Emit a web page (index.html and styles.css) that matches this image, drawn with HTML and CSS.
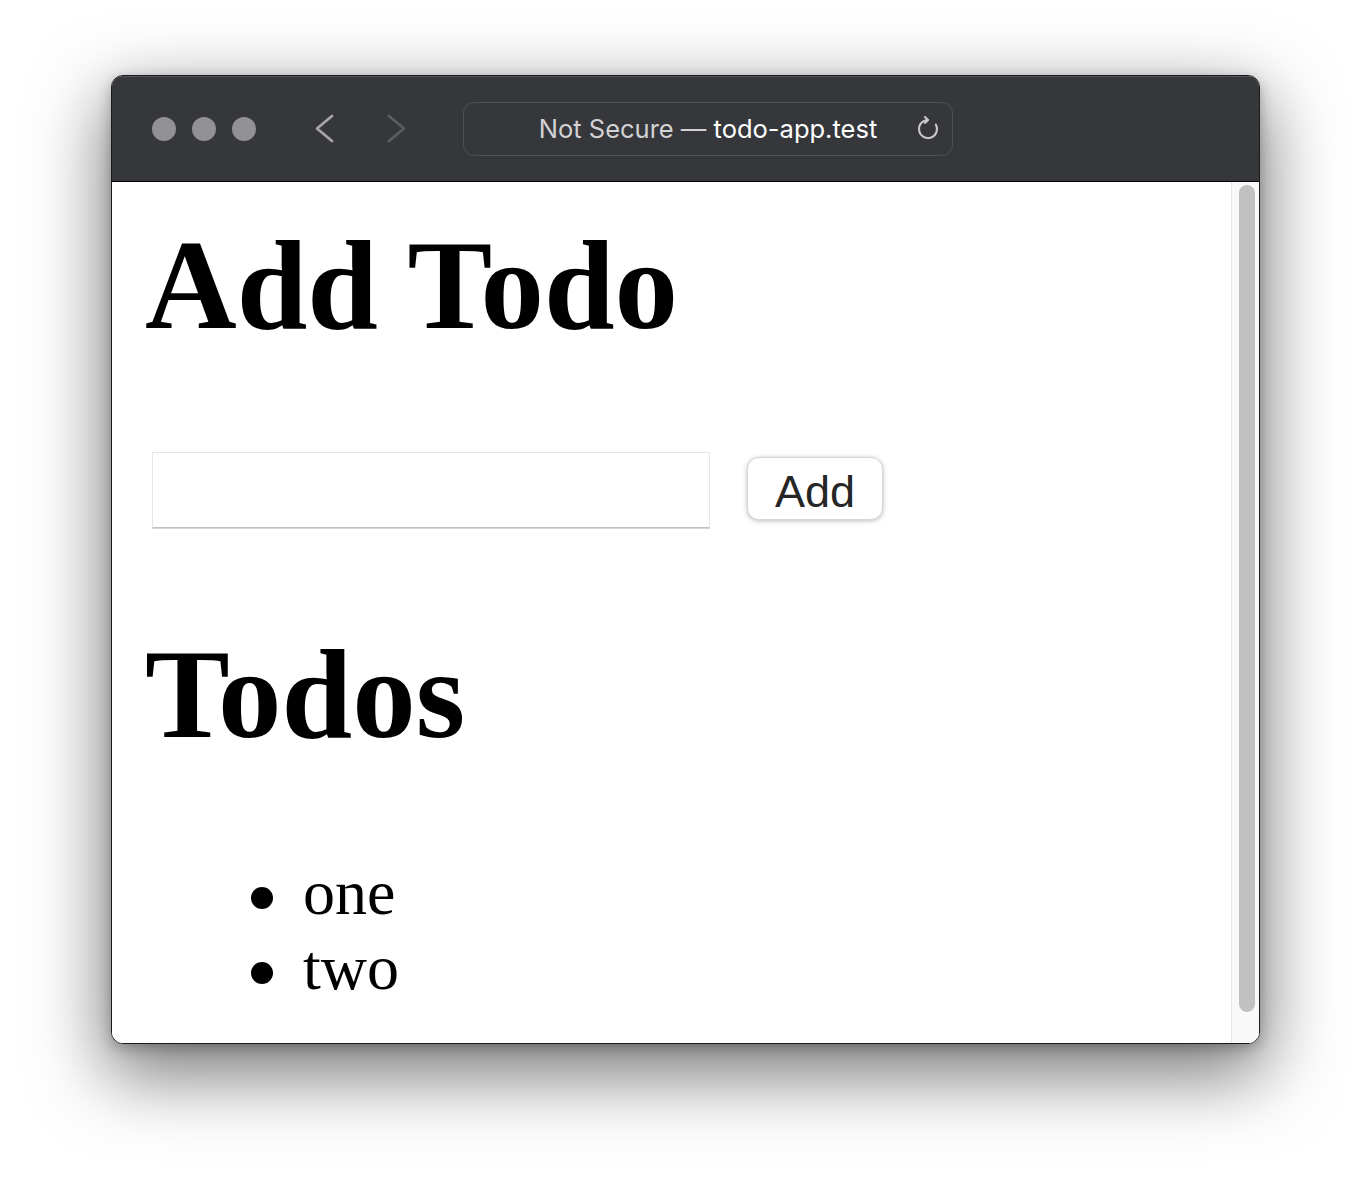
FILE: index.html
```html
<!DOCTYPE html>
<html lang="en">
<head>
<meta charset="utf-8">
<title>Todo App</title>
<link rel="stylesheet" href="styles.css">
</head>
<body>
  <div class="window">
    <div class="toolbar">
      <div class="lights"><span class="light"></span><span class="light"></span><span class="light"></span></div>
      <svg class="nav nav-back" width="30" height="40" viewBox="0 0 30 40"><polyline points="22,7 7,19.5 22,32" /></svg>
      <svg class="nav nav-fwd" width="30" height="40" viewBox="0 0 30 40"><polyline points="9,7 24,19.5 9,32" /></svg>
      <div class="urlbar">
        <span class="url-text"><span class="dim">Not Secure — </span>todo-app.test</span>
        <svg class="reload" width="24" height="26" viewBox="0 0 24 26"><path d="M12 4 A9 9 0 1 0 19.8 8.5" /><polyline points="9,1 12,4 9,7" /></svg>
      </div>
    </div>
    <div class="viewport">
      <main class="page">
        <h1 class="heading">Add Todo</h1>
        <form class="add-form">
          <input class="todo-input" type="text">
          <button class="add-btn" type="button">Add</button>
        </form>
        <h1 class="heading heading-todos">Todos</h1>
        <ul class="todo-list">
          <li>one</li>
          <li>two</li>
        </ul>
      </main>
      <div class="scrollbar"><div class="thumb"></div></div>
    </div>
  </div>
</body>
</html>
```
FILE: styles.css
```css
html, body {
  margin: 0;
  background: #ffffff;
}
body {
  padding: 75px 0 0 111px;
  height: 1192px;
  box-sizing: border-box;
  overflow: hidden;
}
.window {
  width: 1149px;
  height: 969px;
  box-sizing: border-box;
  border: 1px solid #1a1a1c;
  border-radius: 12px;
  overflow: hidden;
  display: flex;
  flex-direction: column;
  box-shadow: 0 26px 72px 6px rgba(0, 0, 0, 0.52), 0 4px 14px rgba(0, 0, 0, 0.25);
  background: #fff;
}
.toolbar {
  height: 106px;
  box-sizing: border-box;
  flex: none;
  background: #36373b;
  border-bottom: 1px solid #000;
  box-shadow: inset 0 1px 0 #56575b;
  display: flex;
  align-items: center;
  padding-left: 40px;
}
.lights {
  display: flex;
  gap: 16px;
}
.light {
  width: 24px;
  height: 24px;
  border-radius: 50%;
  background: #919196;
}
.nav {
  display: block;
  fill: none;
  stroke-width: 2.8;
  stroke-linecap: round;
  stroke-linejoin: round;
}
.nav-back {
  margin-left: 54px;
  stroke: #a4a4a9;
}
.nav-fwd {
  margin-left: 40px;
  stroke: #5b5c60;
}
.urlbar {
  margin-left: 53px;
  width: 490px;
  height: 54px;
  box-sizing: border-box;
  border: 1.5px solid #4f5054;
  border-radius: 11px;
  display: flex;
  align-items: center;
  padding: 0 12px 0 36px;
}
.url-text {
  flex: 1;
  text-align: center;
  font-family: Inter, "Liberation Sans", sans-serif;
  font-size: 25.5px;
  color: #ffffff;
  white-space: nowrap;
}
.url-text .dim {
  color: #d2d2d4;
}
.reload {
  display: block;
  fill: none;
  stroke: #c9c9cb;
  stroke-width: 2;
  stroke-linecap: round;
  stroke-linejoin: round;
}
.viewport {
  flex: 1;
  display: flex;
  background: #ffffff;
  min-height: 0;
}
.page {
  flex: 1;
  padding-left: 33px;
  font-family: "Liberation Serif", "Times New Roman", serif;
  color: #000;
}
.heading {
  margin: 32px 0 0;
  font-family: "Liberation Serif", "Times New Roman", serif;
  font-weight: bold;
  font-size: 127px;
  line-height: 142px;
}
.heading-todos {
  margin-top: 95px;
}
.add-form {
  margin: 96px 0 0;
  padding-left: 7px;
  display: flex;
  align-items: flex-start;
}
.todo-input {
  width: 558px;
  height: 76px;
  box-sizing: border-box;
  margin: 0;
  border: 1px solid #e6e6e6;
  border-bottom: 1px solid #c2c2c2;
  box-shadow: 0 1px 0 #d6d6d6;
  background: #fff;
  outline: none;
  padding: 0 12px;
  font-size: 40px;
}
.add-btn {
  margin: 5px 0 0 37px;
  width: 136px;
  height: 63px;
  box-sizing: border-box;
  border: 1px solid #d6d6d6;
  border-radius: 12px;
  background: #ffffff;
  box-shadow: 0 1px 5px rgba(0, 0, 0, 0.26);
  font-family: "Liberation Sans", Arial, sans-serif;
  font-size: 45px;
  color: #262626;
  padding: 6px 0 0;
  line-height: 54px;
}
.todo-list {
  margin: 90px 0 0;
  padding-left: 158px;
  font-size: 64px;
  line-height: 75px;
  list-style: none;
}
.todo-list li::before {
  content: "";
  display: inline-block;
  width: 22px;
  height: 22px;
  border-radius: 50%;
  background: #000;
  margin-left: -52px;
  margin-right: 30px;
  vertical-align: 5.5px;
}
.scrollbar {
  width: 28px;
  flex: none;
  box-sizing: border-box;
  background: #f9f9f9;
  border-left: 1px solid #e6e6e6;
  padding: 3px 0 0 7px;
}
.thumb {
  width: 16px;
  height: 827px;
  border-radius: 8px;
  background: #c1c1c1;
}
```
